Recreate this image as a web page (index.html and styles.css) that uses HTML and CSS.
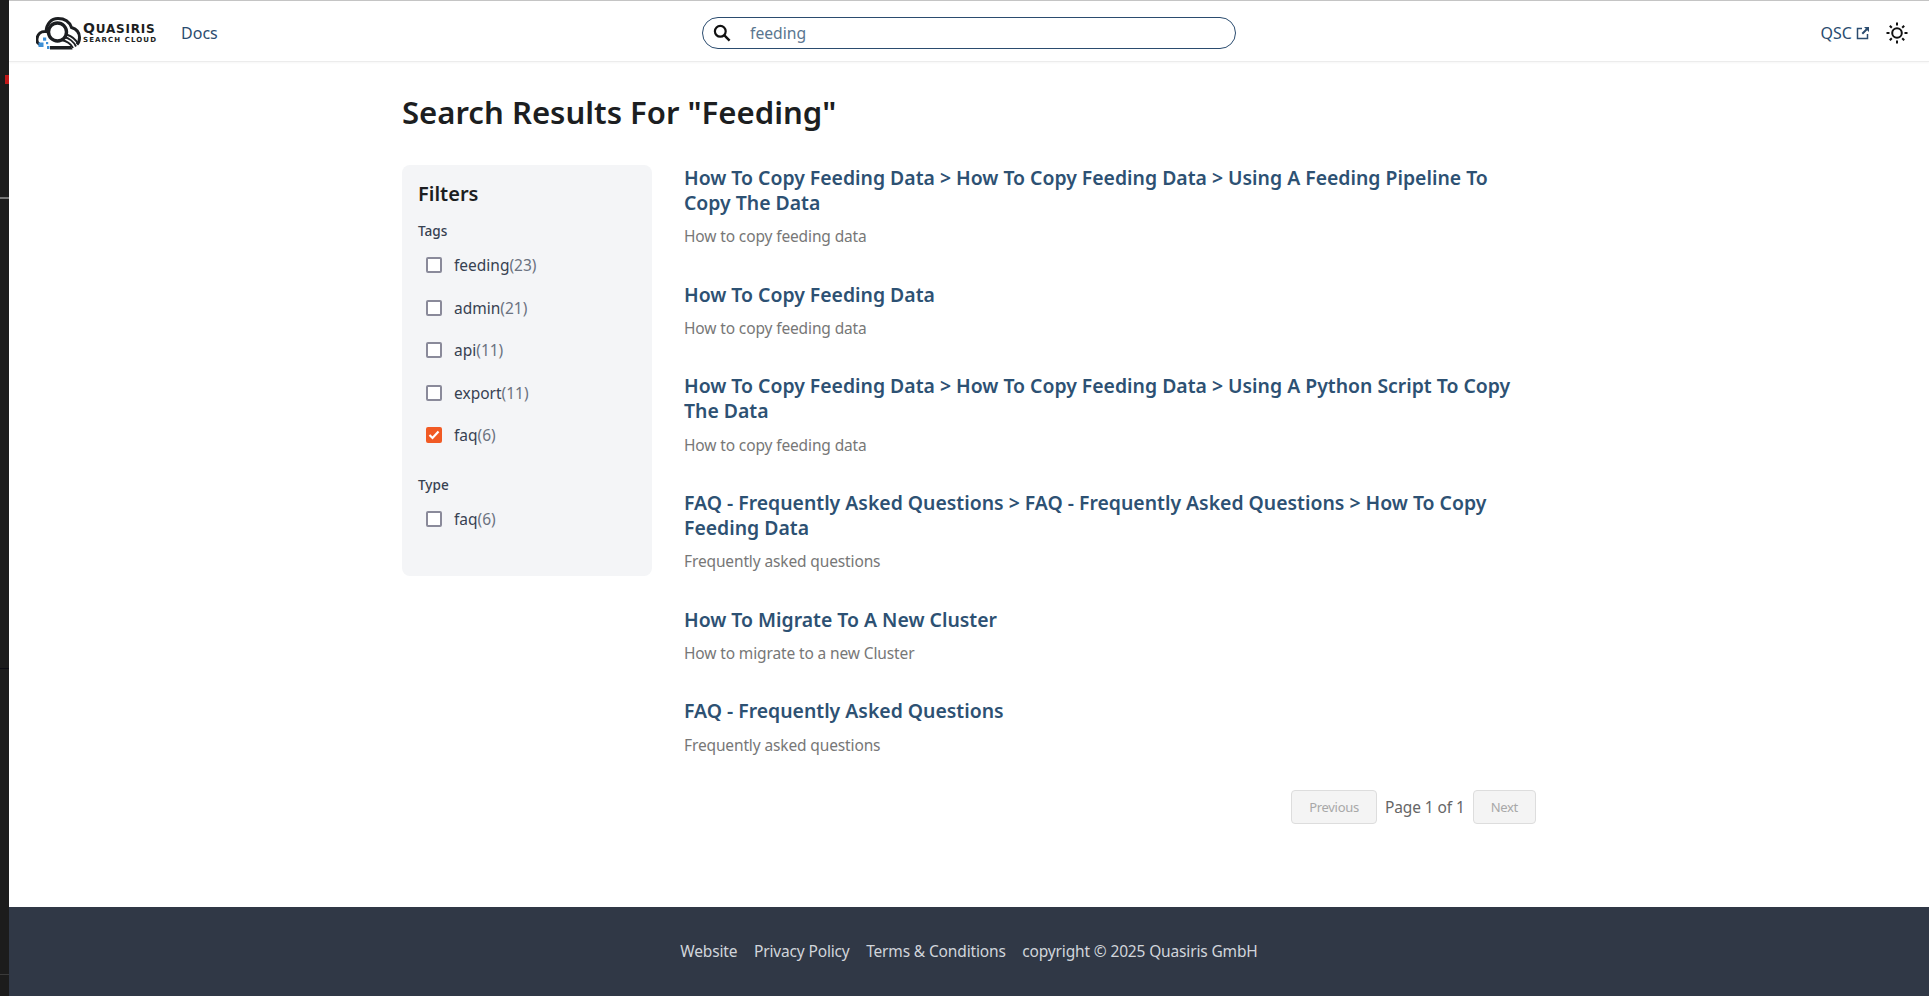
FILE: index.html
```html
<!DOCTYPE html>
<html lang="en">
<head>
    <meta charset="UTF-8">
    <meta name="viewport" content="width=device-width, initial-scale=1.0">
    <title>Search Results</title>
    <link rel="stylesheet" href="styles.css">
</head>
<body>

<div class="desktop-strip">
    <span class="strip-mark"></span>
    <span class="strip-line"></span>
    <span class="strip-dark"></span>
    <span class="strip-low"></span>
</div>

<div class="page">
    <header class="navbar">
        <div class="nav-left">
            <a class="logo" href="#">
                <svg class="logo-mark" width="45" height="33" viewBox="0 0 45 33">
                    <path d="M6 28 C2 27.5 0.5 25 1 21.5 C1.6 17 5 14 10 14.5 C10.5 7 15 1.5 22 1.5 C28.5 1.5 33.5 5 35.5 10.5 C40.5 12 43.5 16 43.5 20.5 C43.5 24 42.5 26 41 27.5" fill="none" stroke="#1c1e21" stroke-width="3"/>
                    <circle cx="21.5" cy="15" r="9" fill="none" stroke="#1c1e21" stroke-width="3.4"/>
                    <path d="M25 23 C31 24 35 27 37 31 M28 20 C33 21 38 25 40 29.5 M30.5 17.5 C35 19 40 22.5 42 27" fill="none" stroke="#1c1e21" stroke-width="1.9"/>
                    <path d="M14 29 H35 L36.5 32.5 H14 Z" fill="#1c1e21"/>
                    <rect x="2.5" y="25.5" width="5" height="4.5" fill="#3d8fd6"/>
                    <rect x="7" y="20.5" width="3.2" height="3.2" fill="#3d8fd6"/>
                    <rect x="10" y="25" width="2.2" height="2.2" fill="#3d8fd6"/>
                    <rect x="11" y="29" width="2.4" height="3" fill="#3d8fd6"/>
                </svg>
                <span class="logo-text">
                    <span class="logo-name"><span class="logo-cap">Q</span>UASIRIS</span>
                    <span class="logo-sub">SEARCH CLOUD</span>
                </span>
            </a>
            <a class="nav-link" href="#">Docs</a>
        </div>

        <div class="search-box">
            <svg width="20" height="20" viewBox="0 0 20 20">
                <circle cx="8.3" cy="8.3" r="5.4" fill="none" stroke="#111" stroke-width="2.2"/>
                <path d="M12.4 12.4 L17.6 17.6" stroke="#111" stroke-width="2.4"/>
            </svg>
            <span class="search-value">feeding</span>
        </div>

        <div class="nav-right">
            <a class="nav-link qsc" href="#">
                QSC
                <svg width="14" height="14" viewBox="0 0 14 14">
                    <path d="M6 2.5 H1.5 V12.5 H11.5 V8" fill="none" stroke="#2b4c6f" stroke-width="1.5"/>
                    <path d="M8 1 H13 V6 L11.2 4.2 L7 8.4 L5.6 7 L9.8 2.8 Z" fill="#2b4c6f"/>
                </svg>
            </a>
            <svg class="theme-icon" width="24" height="24" viewBox="0 0 24 24">
                <circle cx="12" cy="12" r="4.8" fill="none" stroke="#111" stroke-width="2"/>
                <path d="M12 1.5 V4.5 M12 19.5 V22.5 M1.5 12 H4.5 M19.5 12 H22.5 M4.8 4.8 L6.8 6.8 M17.2 17.2 L19.2 19.2 M4.8 19.2 L6.8 17.2 M17.2 6.8 L19.2 4.8" stroke="#111" stroke-width="2"/>
            </svg>
        </div>
    </header>

    <main class="container">
        <h1>Search Results For "Feeding"</h1>

        <div class="layout">
            <aside class="filters">
                <h2>Filters</h2>

                <div class="filter-group">
                    <div class="filter-label">Tags</div>
                    <label class="filter-item"><span class="checkbox"></span><span>feeding<span class="count">(23)</span></span></label>
                    <label class="filter-item"><span class="checkbox"></span><span>admin<span class="count">(21)</span></span></label>
                    <label class="filter-item"><span class="checkbox"></span><span>api<span class="count">(11)</span></span></label>
                    <label class="filter-item"><span class="checkbox"></span><span>export<span class="count">(11)</span></span></label>
                    <label class="filter-item">
                        <span class="checkbox checked">
                            <svg width="12" height="10" viewBox="0 0 12 10"><path d="M1.5 5 L4.5 8 L10.5 1.5" fill="none" stroke="#fff" stroke-width="2.2"/></svg>
                        </span>
                        <span>faq<span class="count">(6)</span></span>
                    </label>
                </div>

                <div class="filter-group">
                    <div class="filter-label">Type</div>
                    <label class="filter-item"><span class="checkbox"></span><span>faq<span class="count">(6)</span></span></label>
                </div>
            </aside>

            <section class="results">
                <article class="result">
                    <h3>How To Copy Feeding Data &gt; How To Copy Feeding Data &gt; Using A Feeding Pipeline To Copy The Data</h3>
                    <p>How to copy feeding data</p>
                </article>
                <article class="result">
                    <h3>How To Copy Feeding Data</h3>
                    <p>How to copy feeding data</p>
                </article>
                <article class="result">
                    <h3>How To Copy Feeding Data &gt; How To Copy Feeding Data &gt; Using A Python Script To Copy The Data</h3>
                    <p>How to copy feeding data</p>
                </article>
                <article class="result">
                    <h3>FAQ - Frequently Asked Questions &gt; FAQ - Frequently Asked Questions &gt; How To Copy Feeding Data</h3>
                    <p>Frequently asked questions</p>
                </article>
                <article class="result">
                    <h3>How To Migrate To A New Cluster</h3>
                    <p>How to migrate to a new Cluster</p>
                </article>
                <article class="result">
                    <h3>FAQ - Frequently Asked Questions</h3>
                    <p>Frequently asked questions</p>
                </article>

                <div class="pagination">
                    <button disabled>Previous</button>
                    <span class="page-info">Page 1 of 1</span>
                    <button disabled>Next</button>
                </div>
            </section>
        </div>
    </main>

    <footer class="footer">
        <a href="#">Website</a>
        <a href="#">Privacy Policy</a>
        <a href="#">Terms &amp; Conditions</a>
        <span>copyright © 2025 Quasiris GmbH</span>
    </footer>
</div>

</body>
</html>
```

FILE: styles.css
```css
* {
    box-sizing: border-box;
}

body {
    font-family: "Noto Sans", sans-serif;
    margin: 0;
    display: flex;
    height: 996px;
    overflow: hidden;
    background: #fff;
    color: #1c1e21;
}

/* sliver of the window behind the browser */
.desktop-strip {
    position: relative;
    width: 9px;
    flex-shrink: 0;
    background: #1c1c1c;
}

.strip-mark {
    position: absolute;
    top: 75px;
    left: 5px;
    width: 4px;
    height: 9px;
    background: #c01818;
}

.strip-line {
    position: absolute;
    top: 197px;
    left: 0;
    width: 9px;
    height: 2px;
    background: #777;
}

.strip-dark {
    position: absolute;
    top: 668px;
    left: 0;
    width: 9px;
    height: 1px;
    background: #0c0c14;
}

.strip-low {
    position: absolute;
    top: 974px;
    left: 0;
    width: 9px;
    height: 1px;
    background: #3a3a3a;
}

.page {
    flex: 1;
    display: flex;
    flex-direction: column;
    min-width: 0;
}

.navbar {
    height: 62px;
    flex-shrink: 0;
    display: grid;
    grid-template-columns: 666px 534px 1fr;
    align-items: center;
    padding: 4px 20px 0 27px;
    border-top: 1px solid #c4c4c4;
    border-bottom: 1px solid #ececec;
    box-shadow: 0 1px 2px rgba(0, 0, 0, 0.04);
}

.nav-left {
    display: flex;
    align-items: center;
    gap: 24px;
}

.logo {
    display: flex;
    align-items: center;
    gap: 2px;
    text-decoration: none;
    color: #1c1e21;
}

.logo-text {
    display: flex;
    flex-direction: column;
    font-family: "DejaVu Sans", sans-serif;
    font-weight: 700;
}

.logo-name {
    font-size: 12px;
    line-height: 13px;
    letter-spacing: 0.8px;
}

.logo-cap {
    font-size: 14px;
}

.logo-sub {
    font-size: 7px;
    line-height: 9px;
    letter-spacing: 1.1px;
}

.nav-link {
    color: #2b4c6f;
    font-size: 16px;
    text-decoration: none;
}

.search-box {
    height: 32px;
    display: flex;
    align-items: center;
    gap: 18px;
    padding-left: 9px;
    border: 1px solid #2b4c6f;
    border-radius: 16px;
}

.search-value {
    font-size: 15.7px;
    color: #5a7690;
}

.nav-right {
    display: flex;
    align-items: center;
    justify-content: flex-end;
    gap: 15px;
}

.qsc {
    display: flex;
    align-items: center;
    gap: 4px;
}

.container {
    flex: 1;
    width: 1134px;
    margin-left: 393px;
}

h1 {
    font-size: 31.1px;
    font-weight: 600;
    line-height: 40px;
    margin: 30px 0 33px;
}

.layout {
    display: flex;
    align-items: flex-start;
    gap: 32px;
}

.filters {
    width: 250px;
    height: 411px;
    flex-shrink: 0;
    padding: 14px 16px;
    background: #f4f5f7;
    border-radius: 8px;
}

.filters h2 {
    font-size: 20px;
    font-weight: 600;
    line-height: 28px;
    margin: 1px 0 13px;
}

.filter-group {
    margin-bottom: 18.5px;
}

.filter-label {
    font-size: 13.6px;
    font-weight: 500;
    line-height: 20px;
    margin-bottom: 3px;
    color: #374151;
}

.filter-item {
    display: flex;
    align-items: center;
    gap: 12px;
    height: 42.5px;
    padding-left: 8px;
    font-size: 15.5px;
    color: #374151;
}

.count {
    color: #6b7280;
}

.checkbox {
    width: 16px;
    height: 16px;
    display: flex;
    align-items: center;
    justify-content: center;
    background: #fff;
    border: 2px solid #8a8a9a;
    border-radius: 2px;
}

.checkbox.checked {
    background: #f15a24;
    border-color: #f15a24;
}

.results {
    flex: 1;
    min-width: 0;
}

.result {
    margin-bottom: 33.5px;
}

.result h3 {
    font-size: 19.4px;
    font-weight: 600;
    line-height: 25px;
    margin: 0 0 9.2px;
    color: #2d5173;
}

.result p {
    font-size: 15.5px;
    letter-spacing: -0.13px;
    line-height: 24px;
    margin: 0;
    color: #777;
}

.pagination {
    display: flex;
    align-items: center;
    justify-content: flex-end;
    gap: 8px;
    margin-top: 21.5px;
}

.pagination button {
    height: 34px;
    padding: 0 17px;
    font-family: inherit;
    font-size: 13px;
    letter-spacing: -0.3px;
    color: #a8a8a8;
    background: #f4f4f4;
    border: 1px solid #dddddd;
    border-radius: 4px;
}

.page-info {
    font-size: 15.5px;
    letter-spacing: -0.1px;
    color: #666;
}

.footer {
    height: 89px;
    flex-shrink: 0;
    display: flex;
    align-items: center;
    justify-content: center;
    gap: 16.5px;
    padding-bottom: 2px;
    background: #303846;
    color: #d1d5db;
    font-size: 15.5px;
    letter-spacing: -0.15px;
}

.footer a {
    color: #d1d5db;
    text-decoration: none;
}
```
